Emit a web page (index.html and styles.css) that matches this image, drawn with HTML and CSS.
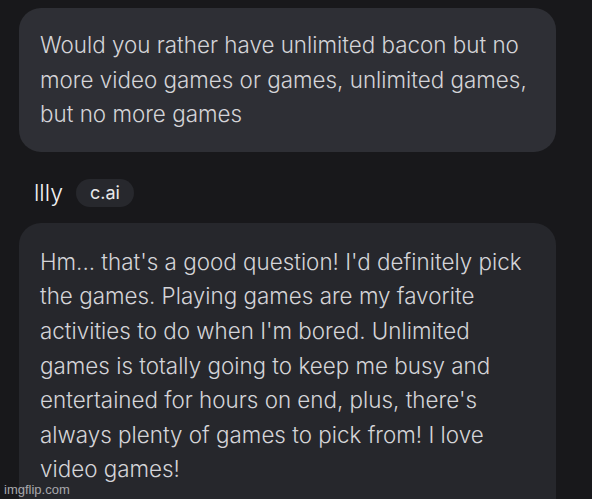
FILE: index.html
```html
<!DOCTYPE html>
<html>
<head>
<meta charset="utf-8">
<link rel="stylesheet" href="styles.css">
</head>
<body>
<div class="chat">
  <div class="bubble user">Would you rather have unlimited bacon but no more video games or games, unlimited games, but no more games</div>
  <div class="meta">
    <span class="name">llly</span>
    <span class="badge">c.ai</span>
  </div>
  <div class="bubble bot">Hm... that's a good question! I'd definitely pick the games. Playing games are my favorite activities to do when I'm bored. Unlimited games is totally going to keep me busy and entertained for hours on end, plus, there's always plenty of games to pick from! I love video games!</div>
</div>
<div class="watermark">imgflip.com</div>
</body>
</html>
```
FILE: styles.css
```css
html, body {
  margin: 0;
  padding: 0;
  background: #18181b;
  width: 592px;
  height: 499px;
  overflow: hidden;
  font-family: Inter, "Noto Sans", sans-serif;
}
.chat {
  display: flex;
  flex-direction: column;
  padding: 8px 36px 0 19px;
}
.bubble {
  border-radius: 22px;
  padding: 20px 16px 20px 21px;
  font-size: 22.4px;
  font-weight: 300;
  line-height: 34.6px;
  color: #d4d4d8;
}
.user {
  background: #2e2f35;
}
.bot {
  background: #26272c;
  padding-top: 22px;
  padding-bottom: 40px;
}
.meta {
  display: flex;
  align-items: center;
  gap: 13px;
  margin: 27px 0 16px 15px;
  height: 28px;
}
.name {
  font-size: 23px;
  color: #f0f0f2;
  font-weight: 300;
}
.badge {
  background: #27282d;
  color: #e8e8ea;
  font-size: 18px;
  padding: 0 14px;
  height: 28px;
  line-height: 28px;
  border-radius: 14px;
}
.watermark {
  position: absolute;
  left: 4px;
  top: 482px;
  font-size: 13px;
  color: #a8a8ad;
  font-family: "Liberation Sans", Arial, sans-serif;
}
```
